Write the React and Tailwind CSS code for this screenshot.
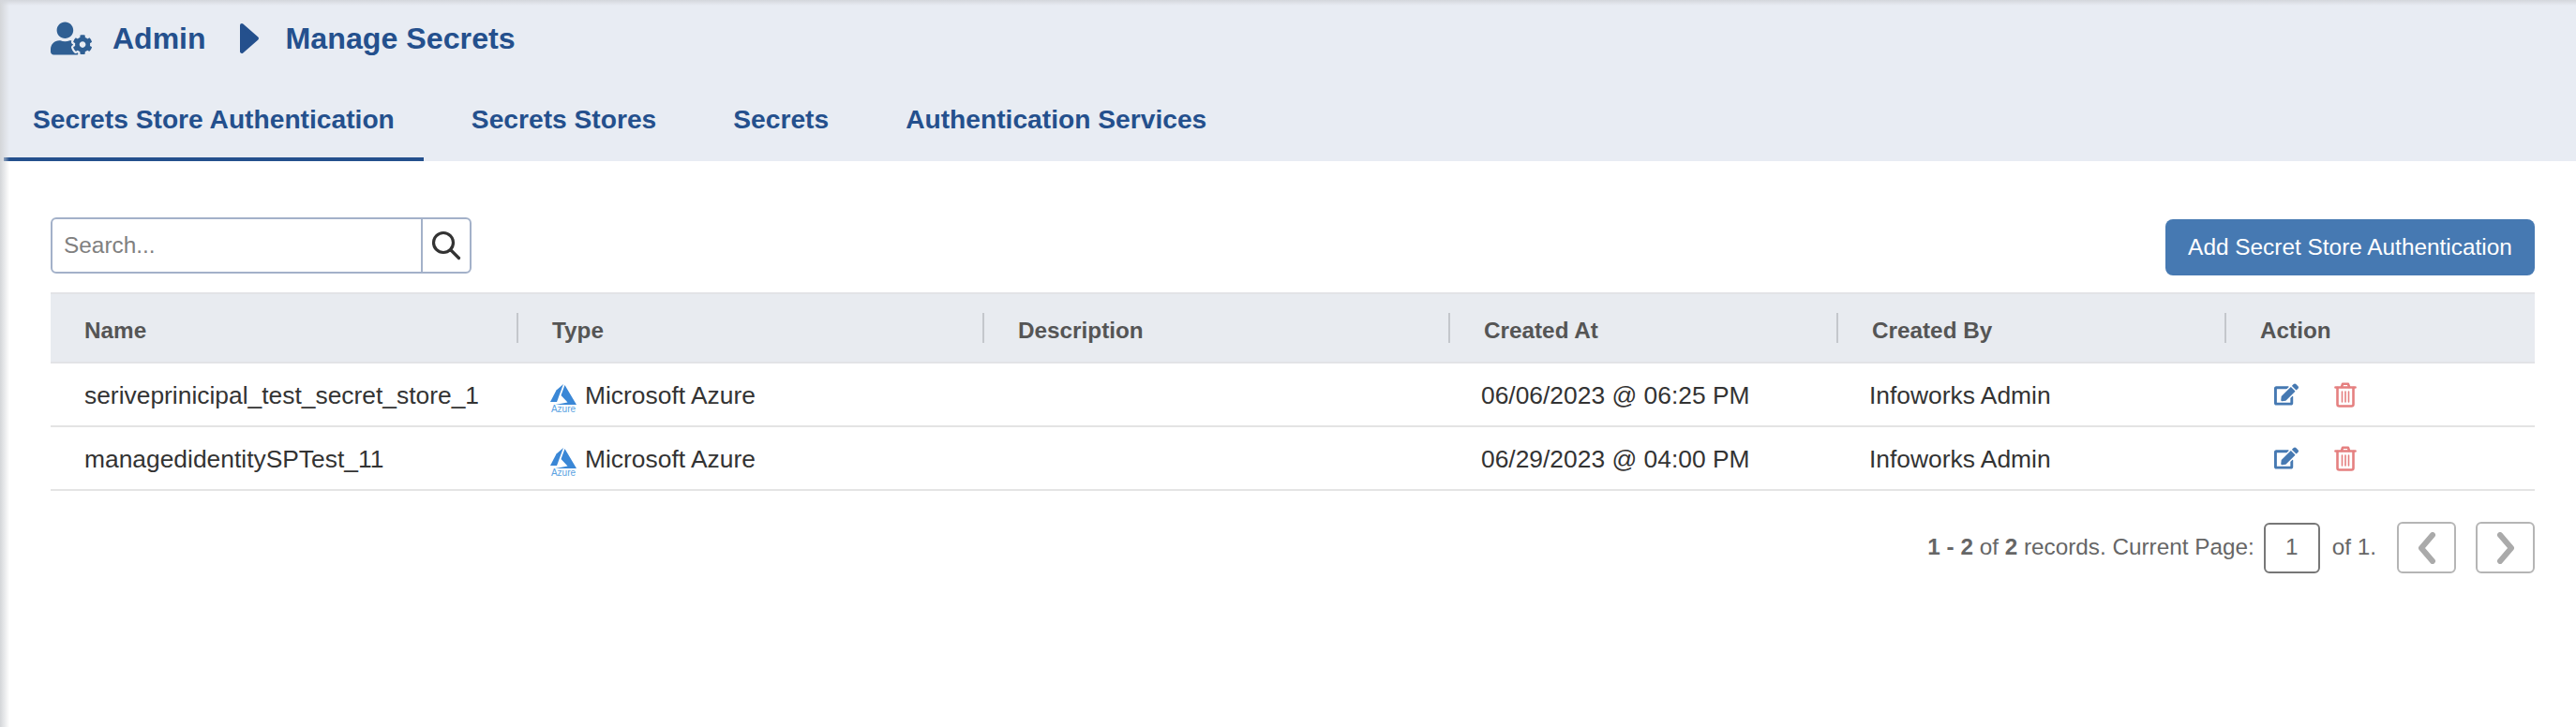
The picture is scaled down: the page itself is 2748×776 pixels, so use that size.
import React from "react";
import { FaUserCog, FaEdit } from "react-icons/fa";

const tabs = ["Secrets Store Authentication", "Secrets Stores", "Secrets", "Authentication Services"];
const rows = [
    { name: "seriveprinicipal_test_secret_store_1", created: "06/06/2023 @ 06:25 PM" },
    { name: "managedidentitySPTest_11", created: "06/29/2023 @ 04:00 PM" },
];
const columns = "grid grid-cols-[499px_497px_497px_414px_414px_1fr]";

// azure logo from the type column
const AzureLogo = () => (
    <svg width="28" height="31" viewBox="0 0 28 31" className="shrink-0 mt-[5px]">
        <path d="M14 1 L6.5 7.5 L0 20 H7 Z" fill="#3a87d6" />
        <path d="M15.5 2 L11.5 13 L18.5 20.5 L5.5 23 H28 Z" fill="#3a87d6" />
        <text x="14" y="30.5" textAnchor="middle" fontSize="10" fill="#5aa2e2" fontFamily="'Liberation Sans', sans-serif">Azure</text>
    </svg>
);

const TrashIcon = () => (
    <svg width="24" height="27" viewBox="0 0 24 27" fill="none" stroke="#e58080" strokeWidth="2.6" strokeLinecap="round" strokeLinejoin="round">
        <path d="M1.5 5.5 H22.5" />
        <path d="M8 5 L9 1.8 H15 L16 5" />
        <path d="M3.5 6 V23.5 Q3.5 25.5 5.5 25.5 H18.5 Q20.5 25.5 20.5 23.5 V6" />
        <path d="M8.5 10 V21 M12 10 V21 M15.5 10 V21" strokeWidth="1.6" />
    </svg>
);

const Chevron = ({ d }) => (
    <svg width="20" height="34" viewBox="0 0 20 34" fill="none" stroke="#aaaaaa" strokeWidth="6" strokeLinecap="round" strokeLinejoin="round">
        <path d={d} />
    </svg>
);

const HeaderCell = ({ label, last }) => (
    <div className="flex items-center justify-between pl-9">
        <span className="mt-[6px]">{label}</span>
        {!last && <span className="w-[2px] h-8 bg-[#c4c7cc]" />}
    </div>
);

const App = () => {
    return (
        <div className="relative min-h-screen bg-white font-['Liberation_Sans',Arial,sans-serif] overflow-hidden">
            {/* left and top edge shadow */}
            <div className="absolute inset-y-0 left-0 w-[10px] bg-gradient-to-r from-[#d4d6d9] to-transparent" />
            <div className="absolute inset-x-0 top-0 h-[6px] bg-gradient-to-b from-[#d4d7dc] to-transparent" />

            <header className="bg-[#e8ecf3] h-[172px] flex flex-col text-[#24508d] font-bold">
                <div className="flex items-center h-[82px] pl-[54px] text-[32px]">
                    <FaUserCog className="text-[44px] text-[#2f5f93]" />
                    <span className="ml-[22px]">Admin</span>
                    <svg width="22" height="34" viewBox="0 0 22 34" className="ml-[35px]">
                        <path d="M3 3 L19 17 L3 31 Z" fill="#24508d" stroke="#24508d" strokeWidth="4" strokeLinejoin="round" />
                    </svg>
                    <span className="ml-[28px] text-[32.2px]">Manage Secrets</span>
                </div>
                <nav className="flex gap-[20px] pl-[4px] text-[28.2px]">
                    {tabs.map((tab, i) => (
                        <div key={tab} className={`h-[90px] pt-[5px] px-[31px] flex items-center border-b-4 ${i === 0 ? "border-[#24508d]" : "border-transparent"}`}>
                            {tab}
                        </div>
                    ))}
                </nav>
            </header>

            <main className="pt-[60px] pl-[54px] pr-[44px]">
                <div className="flex justify-between items-start mb-[18px]">
                    <div className="flex w-[449px] h-[60px] border-2 border-[#a3b1c9] rounded-md">
                        <div className="flex-1 flex items-center pl-3 text-[24.4px] text-[#808080]">Search...</div>
                        <div className="w-[52px] flex items-center justify-center border-l-2 border-[#a3b1c9]">
                            <svg width="32" height="32" viewBox="0 0 32 32" fill="none" stroke="#333" strokeWidth="3.2" strokeLinecap="round">
                                <circle cx="13" cy="13" r="10.5" />
                                <path d="M21 21 L29.5 29.5" />
                            </svg>
                        </div>
                    </div>
                    <button className="mt-[2px] w-[394px] h-[60px] bg-[#4679b2] rounded-lg text-white text-[24.4px]">Add Secret Store Authentication</button>
                </div>

                <div className={`${columns} h-[76px] items-center bg-[#e8ebf0] border-y-2 border-[#e2e3e6] text-[24.3px] font-bold text-[#555]`}>
                    <HeaderCell label="Name" />
                    <HeaderCell label="Type" />
                    <HeaderCell label="Description" />
                    <HeaderCell label="Created At" />
                    <HeaderCell label="Created By" />
                    <HeaderCell label="Action" last />
                </div>
                {rows.map((row) => (
                    <div key={row.name} className={`${columns} h-[68px] items-center border-b-2 border-[#e4e4e4] text-[26.4px] text-[#333]`}>
                        <div className="pl-9 mt-[3px]">{row.name}</div>
                        <div className="pl-[34px] mt-[3px] flex items-center gap-[9px]"><AzureLogo />Microsoft Azure</div>
                        <div />
                        <div className="pl-[33px] mt-[3px]">{row.created}</div>
                        <div className="pl-[33px] mt-[3px]">Infoworks Admin</div>
                        <div className="pl-[51px] flex items-center gap-[38px]">
                            <FaEdit className="text-[26px] text-[#4679b2]" />
                            <TrashIcon />
                        </div>
                    </div>
                ))}

                <div className="flex items-center justify-end mt-[33px] text-[24.3px] text-[#666]">
                    <span><b>1 - 2</b> of <b>2</b> records. Current Page:</span>
                    <div className="ml-[10px] w-[60px] h-[54px] border-2 border-[#777] rounded-md flex items-center justify-center">1</div>
                    <span className="ml-[13px]">of 1.</span>
                    <div className="ml-[22px] w-[63px] h-[55px] border-2 border-[#b5b5b5] rounded-md flex items-center justify-center"><Chevron d="M16 3 L4 17 L16 31" /></div>
                    <div className="ml-[21px] w-[63px] h-[55px] border-2 border-[#b5b5b5] rounded-md flex items-center justify-center"><Chevron d="M4 3 L16 17 L4 31" /></div>
                </div>
            </main>
        </div>
    );
};

export default App;
